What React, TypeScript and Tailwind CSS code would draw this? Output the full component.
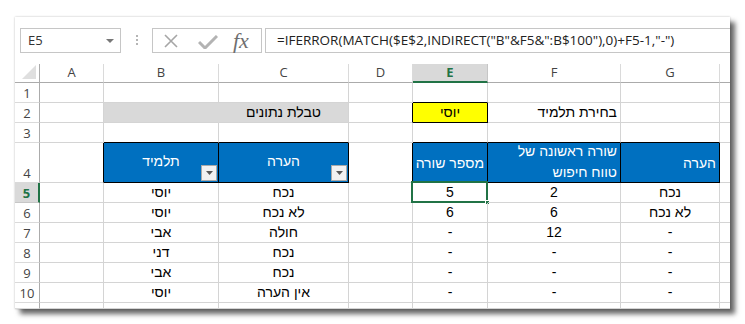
import React from "react";

type Cell = { t?: React.ReactNode; c?: string; a?: "c" | "r" };

const CELL_FONT = { fontFamily: '"Liberation Sans", Arial, sans-serif' };
const UI_FONT = { fontFamily: '"Open Sans", "Noto Sans", sans-serif' };

const COLS = ["A", "B", "C", "D", "E", "F", "G", ""];

const blueHead = "bg-[#0070c0] text-white border-r-black border-b-black";

function DropBtn() {
  return (
    <span className="absolute right-[1px] bottom-[1px] flex h-[16px] w-[16px] items-center justify-center border border-[#a9a9a9] bg-[#f2f2f2]">
      <svg width="7" height="4" viewBox="0 0 7 4">
        <polygon points="0,0 7,0 3.5,4" fill="#595959" />
      </svg>
    </span>
  );
}

const rows: Cell[][] = [
  // 1
  [{}, {}, {}, {}, { c: "border-b-black" }, {}, {}, {}],
  // 2
  [
    {},
    { c: "bg-[#d9d9d9] border-r-[#d9d9d9]" },
    { t: "טבלת נתונים", a: "c", c: "bg-[#d9d9d9]" },
    { c: "border-r-black" },
    { t: "יוסי", a: "c", c: "bg-[#ffff00] border-r-black border-b-black" },
    { t: "בחירת תלמיד", a: "r" },
    {},
    {},
  ],
  // 3
  [
    {},
    { c: "border-b-black" },
    { c: "border-b-black" },
    {},
    { c: "border-b-black" },
    { c: "border-b-black" },
    { c: "border-b-black" },
    {},
  ],
  // 4
  [
    { c: "border-r-black" },
    {
      t: (
        <>
          <span className="pb-[2px]">תלמיד</span>
          <DropBtn />
        </>
      ),
      a: "c",
      c: blueHead + " !items-center",
    },
    {
      t: (
        <>
          <span className="pb-[2px]">הערה</span>
          <DropBtn />
        </>
      ),
      a: "c",
      c: blueHead + " !items-center",
    },
    { c: "border-r-black" },
    { t: <span className="pt-[3px]">מספר שורה</span>, a: "r", c: blueHead + " !items-center" },
    {
      t: (
        <span className="flex flex-col items-end leading-[21px]">
          <span>שורה ראשונה של</span>
          <span>טווח חיפוש</span>
        </span>
      ),
      a: "r",
      c: blueHead + " !items-center",
    },
    { t: <span className="pt-[3px]">הערה</span>, a: "r", c: blueHead + " !items-center" },
    {},
  ],
];

const data: string[][] = [
  ["יוסי", "נכח", "5", "2", "נכח"],
  ["יוסי", "לא נכח", "6", "6", "לא נכח"],
  ["אבי", "חולה", "-", "12", "-"],
  ["דני", "נכח", "-", "-", "-"],
  ["אבי", "נכח", "-", "-", "-"],
  ["יוסי", "אין הערה", "-", "-", "-"],
];

data.forEach((d, i) => {
  rows.push([
    {},
    { t: d[0], a: "c" },
    { t: d[1], a: "c" },
    {},
    {
      t:
        i === 0 ? (
          <>
            {d[2]}
            <span className="absolute -left-[2px] -top-[2px] -right-[1px] -bottom-[1px] border-2 border-[#217346]" />
            <span className="absolute -right-[3px] -bottom-[3px] h-[5px] w-[5px] border border-white bg-[#217346]" />
          </>
        ) : (
          d[2]
        ),
      a: "c",
    },
    { t: d[3], a: "c" },
    { t: d[4], a: "c" },
    {},
  ]);
});

rows.push([{}, {}, {}, {}, {}, {}, {}, {}]);

export default function App() {
  return (
    <div className="relative h-[324px] w-[745px] overflow-hidden bg-white">
      <div className="ml-[15px] mt-[17px] flex h-[292px] w-[715px] flex-col bg-white shadow-[0_0_2px_rgba(0,0,0,0.25),5px_5px_5px_rgba(0,0,0,0.6)]">
        {/* formula bar */}
        <div className="flex h-[47px] items-start pl-[5px] pt-[11px]" style={UI_FONT}>
          <div className="flex h-[25px] w-[101px] items-center justify-between border border-[#c6c6c6] pl-[7px] pr-[6px] text-[13px] text-[#333]">
            <span>E5</span>
            <svg width="8" height="4" viewBox="0 0 8 4">
              <polygon points="0,0 8,0 4,4" fill="#777" />
            </svg>
          </div>
          <div className="ml-[15px] mt-[7px] flex flex-col gap-[2px]">
            <span className="h-[2px] w-[2px] bg-[#b5b5b5]" />
            <span className="h-[2px] w-[2px] bg-[#b5b5b5]" />
            <span className="h-[2px] w-[2px] bg-[#b5b5b5]" />
          </div>
          <div className="ml-[14px] flex h-[25px] w-[110px] items-center border border-[#c6c6c6] pl-[10px]">
            <svg width="16" height="16" viewBox="0 0 16 16">
              <path d="M2 2 L14 14 M14 2 L2 14" stroke="#a6a6a6" strokeWidth="1.6" />
            </svg>
            <svg width="20" height="14" viewBox="0 0 20 14" className="ml-[19px] mt-[2px]">
              <path d="M1 7 L7 13 L19 1" stroke="#b3b3b3" strokeWidth="3" fill="none" />
            </svg>
            <span
              className="ml-[15px] text-[22px] italic leading-none text-[#6f6f6f]"
              style={{ fontFamily: '"Liberation Serif", serif' }}
            >
              fx
            </span>
          </div>
          <div className="ml-[3px] flex h-[25px] flex-1 items-center border-y border-l border-[#c6c6c6] pl-[11px] text-[13.5px] text-[#222]">
            =IFERROR(MATCH($E$2,INDIRECT("B"&amp;F5&amp;":B$100"),0)+F5-1,"-")
          </div>
        </div>
        <div className="h-[11px]" />
        {/* grid */}
        <div className="grid grid-cols-[25px_64px_115px_130px_64px_75px_133px_99px_10px] grid-rows-[19px_20px_20px_20px_40px_20px_20px_20px_20px_20px_20px_6px]">
          {/* column header row */}
          <div className="relative border-b border-r border-[#ababab]">
            <svg width="14" height="14" viewBox="0 0 14 14" className="absolute bottom-[3px] right-[3px]">
              <polygon points="14,0 14,14 0,14" fill="#dfdfdf" />
            </svg>
          </div>
          {COLS.map((c, i) => (
            <div
              key={c + i}
              style={UI_FONT}
              className={`flex items-center justify-center border-r border-b text-[13px] ${
                c === "E"
                  ? "border-r-[#c6c6c6] border-b-2 border-b-[#217346] bg-[#d9d9d9] font-bold text-[#217346]"
                  : "border-r-[#dadada] border-b-[#ababab] text-[#444]"
              } ${c === "" ? "border-r-0" : ""}`}
            >
              {c}
            </div>
          ))}
          {rows.map((r, ri) => (
            <React.Fragment key={ri}>
              <div
                style={UI_FONT}
                className={`flex items-end justify-center border-b border-r text-[13px] leading-[18px] ${
                  ri === 4
                    ? "border-r-2 border-r-[#217346] border-b-[#c6c6c6] bg-[#d9d9d9] font-bold text-[#217346]"
                    : "border-r-[#ababab] border-b-[#dadada] text-[#444]"
                }`}
              >
                {ri < 10 ? ri + 1 : ""}
              </div>
              {r.map((cell, ci) => (
                <div
                  key={ci}
                  style={CELL_FONT}
                  className={`relative flex items-end border-b border-r border-[#d4d4d4] pb-[1px] text-[14px] leading-[17px] text-black ${
                    cell.a === "c" ? "justify-center" : cell.a === "r" ? "justify-end pr-[3px]" : ""
                  } ${ci === 7 ? "border-r-0" : ""} ${cell.c ?? ""}`}
                >
                  {cell.t}
                </div>
              ))}
            </React.Fragment>
          ))}
        </div>
      </div>
    </div>
  );
}
